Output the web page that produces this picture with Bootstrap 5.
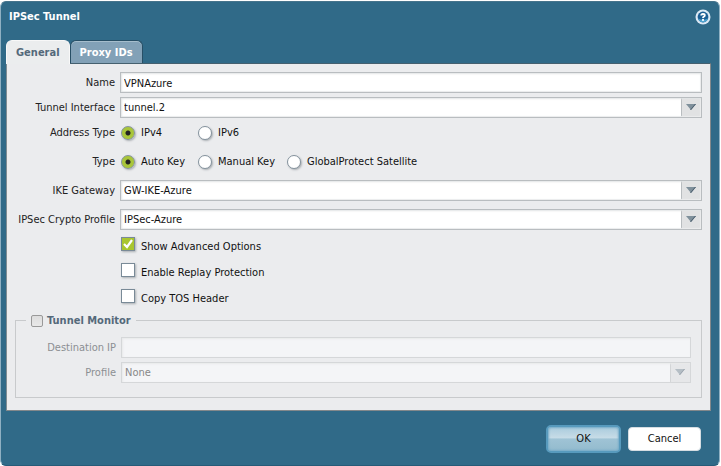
<!DOCTYPE html>
<html lang="en">
<head>
<meta charset="utf-8">
<meta name="viewport" content="width=device-width, initial-scale=1">
<title>IPSec Tunnel</title>
<link rel="stylesheet" href="https://cdn.jsdelivr.net/npm/bootstrap@5.3.0/dist/css/bootstrap.min.css">
<style>
body{background:#fff;font-family:"DejaVu Sans Condensed","Noto Sans",sans-serif;font-size:11px;line-height:16px;color:#222}
.dialog-box{margin:1px 1px 0 0;background:#306a88;border:1px solid #8fb0c2;border-top-color:#46748c;border-bottom-color:#265b78;border-radius:6px;padding:0 8px 12px 5px}
.dialog-head{padding:6px 0 15px 3px}
.dialog-title{font-size:11px;line-height:17px;font-weight:700;color:#fff}
.help-btn{width:16px;height:16px}
.tab-row .nav-link{height:23px;border:1px solid #274f66;border-bottom:0;border-radius:6px 6px 0 0;padding:2px 9px;font-size:11px;line-height:17px;font-weight:700;color:#fff;background:#82a1b7;box-shadow:inset 0 1px #a5bdcc}
.tab-row .nav-link.active{position:relative;z-index:1;height:24px;margin-bottom:-1px;color:#54697a;background:#ebedee;border-color:#f8f8f8;box-shadow:none}
.tab-panel{background:#ebecee;border:1px solid #83888b;border-top-color:#45606f;border-left-color:#7f8c92;padding:8px 8px 12px 0}
.row-label{width:108px;margin-right:5px;line-height:21px;text-align:right;flex:none}
.field{height:21px;min-width:0;border:1px solid #b9bdc0;border-radius:0;padding:1px 3px 0;background-color:#fff;font-size:11px;line-height:18px;color:#111;box-shadow:inset 1px 1px 2px #e2e4e5,inset -1px -1px 1px #ecedee}
.field:focus{border-color:#b9bdc0}
.pick{appearance:none;padding-right:24px;background-image:url("data:image/svg+xml,%3Csvg xmlns='http://www.w3.org/2000/svg' width='20' height='19'%3E%3Cpath fill='%23e1e2e3' d='M0 0h20v19H0z'/%3E%3Cpath fill='%23b9bdc0' d='M0 0h1v19H0z'/%3E%3Cpath fill='%237f909b' d='M5 6h10l-5 6z'/%3E%3Cpath fill='%2346596a' d='M14 6h1l-5 6h-1z'/%3E%3C/svg%3E");background-repeat:no-repeat;background-position:right top;background-size:20px 19px}
.choice-row{margin-bottom:8px}
.choice{min-width:77px;line-height:21px;color:#111}
.choice-wide{min-width:89px}
.mark-box{appearance:none;flex:none;width:14px;height:14px;margin:0 6px 0 1px;border:1px solid #798a97;background:#fff;box-shadow:1px 1px 2px #a9aeb2}
.mark-box[type=radio]{border-radius:50%;border-color:#84929d}
.mark-box[type=radio]:checked{background:radial-gradient(circle,#222 0 2px,#a9c63a 3px)}
.mark-box[type=checkbox]:checked{background:#a9c62f url("data:image/svg+xml,%3Csvg xmlns='http://www.w3.org/2000/svg' viewBox='0 0 12 12'%3E%3Cpath fill='none' stroke='%23fff' stroke-width='2.2' d='M2 6l3 3 5-7'/%3E%3C/svg%3E") center/12px no-repeat}
.check-list{margin-top:-1px}
.check-line{height:16px;padding-left:113px;margin-bottom:10px}
.check-line label{color:#111;padding-top:2px}
.monitor{border:1px solid #c8cacc;margin:-3px 0 0 8px;padding:8px 10px 14px 0}
.monitor legend{float:none;width:auto;margin:-10px 0 0 10px;padding:0 5px;font-size:11px;line-height:17px;font-weight:700;color:#54697a;background:#ebecee}
.monitor .mark-box{width:12px;height:12px;margin:0 4px 0 0;border-color:#999;border-radius:2px;background:linear-gradient(#ddd,#e8e8e8);box-shadow:none}
.monitor .row-label{width:100px;color:#8b8f93}
.monitor .field:disabled{opacity:1;border-color:#d5d7d9;background-color:#f4f5f7;color:#888;box-shadow:inset 1px 1px 2px #e8e9ea}
.monitor .pick{background-image:url("data:image/svg+xml,%3Csvg xmlns='http://www.w3.org/2000/svg' width='20' height='19'%3E%3Cpath fill='%23e6e7e9' d='M0 0h20v19H0z'/%3E%3Cpath fill='%23d3d5d7' d='M0 0h1v19H0z'/%3E%3Cpath fill='%23b5bec5' d='M5 6h10l-5 6z'/%3E%3Cpath fill='%2399a3ac' d='M14 6h1l-5 6h-1z'/%3E%3C/svg%3E")}
.dialog-foot{padding:14px 10px 0 0;gap:7px}
.foot-btn{width:73px;height:24px;padding:0;border:1px solid #d5dde2;border-radius:4px;background:#fff;font-size:11px;line-height:22px;color:#111}
.foot-btn.main-btn{width:75px;height:28px;border:2px solid #579abd;border-radius:5px;background:linear-gradient(#a9cbdd,#c7dce7 45%,#9fc3d5 50%,#93bbce);box-shadow:inset 0 0 2px 1px #76acc8}
</style>
<script src="https://cdn.jsdelivr.net/npm/bootstrap@5.3.0/dist/js/bootstrap.bundle.min.js"></script>
</head>
<body>
<main class="dialog-box">
  <header class="dialog-head d-flex align-items-center justify-content-between">
    <h1 class="dialog-title m-0">IPSec Tunnel</h1>
    <button type="button" class="help-btn btn p-0 border-0 d-flex" aria-label="Help">
      <svg width="16" height="16" viewBox="0 0 16 16" aria-hidden="true"><circle cx="8" cy="8" r="7.5" fill="#dce9f5"/><circle cx="8" cy="8" r="5.4" fill="#1c5f95"/><path d="M3 9.5a5.2 5.2 0 0 0 10 0Q8 12 3 9.5z" fill="#4fa3cf"/><path d="M6.2 6.6Q6.2 5 8 5T9.8 6.4Q9.8 7.3 8.7 7.8Q8 8.2 8 9.1" fill="none" stroke="#fff" stroke-width="1.8"/><circle cx="8" cy="10.9" r="1.1" fill="#fff"/></svg>
    </button>
  </header>
  <nav class="tab-row nav align-items-start" role="tablist">
    <button type="button" class="nav-link active" role="tab" aria-selected="true">General</button>
    <button type="button" class="nav-link" role="tab" aria-selected="false">Proxy IDs</button>
  </nav>
  <form>
    <div class="tab-panel">
      <div class="d-flex mb-1"><label class="row-label" for="name">Name</label><input id="name" class="field flex-fill" value="VPNAzure"></div>
      <div class="d-flex mb-1"><label class="row-label" for="iface">Tunnel Interface</label><select id="iface" class="field pick flex-fill"><option>tunnel.2</option></select></div>
      <div class="choice-row d-flex" role="radiogroup" aria-labelledby="addr"><span id="addr" class="row-label">Address Type</span>
        <label class="choice d-flex align-items-center"><input class="mark-box" type="radio" name="addr" checked>IPv4</label>
        <label class="choice d-flex align-items-center"><input class="mark-box" type="radio" name="addr">IPv6</label>
      </div>
      <div class="choice-row d-flex" role="radiogroup" aria-labelledby="kind"><span id="kind" class="row-label">Type</span>
        <label class="choice d-flex align-items-center"><input class="mark-box" type="radio" name="kind" checked>Auto Key</label>
        <label class="choice choice-wide d-flex align-items-center"><input class="mark-box" type="radio" name="kind">Manual Key</label>
        <label class="choice d-flex align-items-center"><input class="mark-box" type="radio" name="kind">GlobalProtect Satellite</label>
      </div>
      <div class="d-flex mb-2"><label class="row-label" for="gateway">IKE Gateway</label><select id="gateway" class="field pick flex-fill"><option>GW-IKE-Azure</option></select></div>
      <div class="d-flex mb-2"><label class="row-label" for="crypto">IPSec Crypto Profile</label><select id="crypto" class="field pick flex-fill"><option>IPSec-Azure</option></select></div>
      <div class="check-list">
        <div class="check-line d-flex"><input id="adv" class="mark-box" type="checkbox" checked><label for="adv">Show Advanced Options</label></div>
        <div class="check-line d-flex"><input id="replay" class="mark-box" type="checkbox"><label for="replay">Enable Replay Protection</label></div>
        <div class="check-line d-flex"><input id="tos" class="mark-box" type="checkbox"><label for="tos">Copy TOS Header</label></div>
      </div>
      <fieldset class="monitor">
        <legend><label class="d-flex align-items-center"><input class="mark-box" type="checkbox">Tunnel Monitor</label></legend>
        <div class="d-flex mb-1"><label class="row-label" for="dest">Destination IP</label><input id="dest" class="field flex-fill" disabled></div>
        <div class="d-flex"><label class="row-label" for="profile">Profile</label><select id="profile" class="field pick flex-fill" disabled><option>None</option></select></div>
      </fieldset>
    </div>
    <footer class="dialog-foot d-flex justify-content-end align-items-center">
      <button type="button" class="foot-btn main-btn">OK</button>
      <button type="button" class="foot-btn">Cancel</button>
    </footer>
  </form>
</main>
</body>
</html>
